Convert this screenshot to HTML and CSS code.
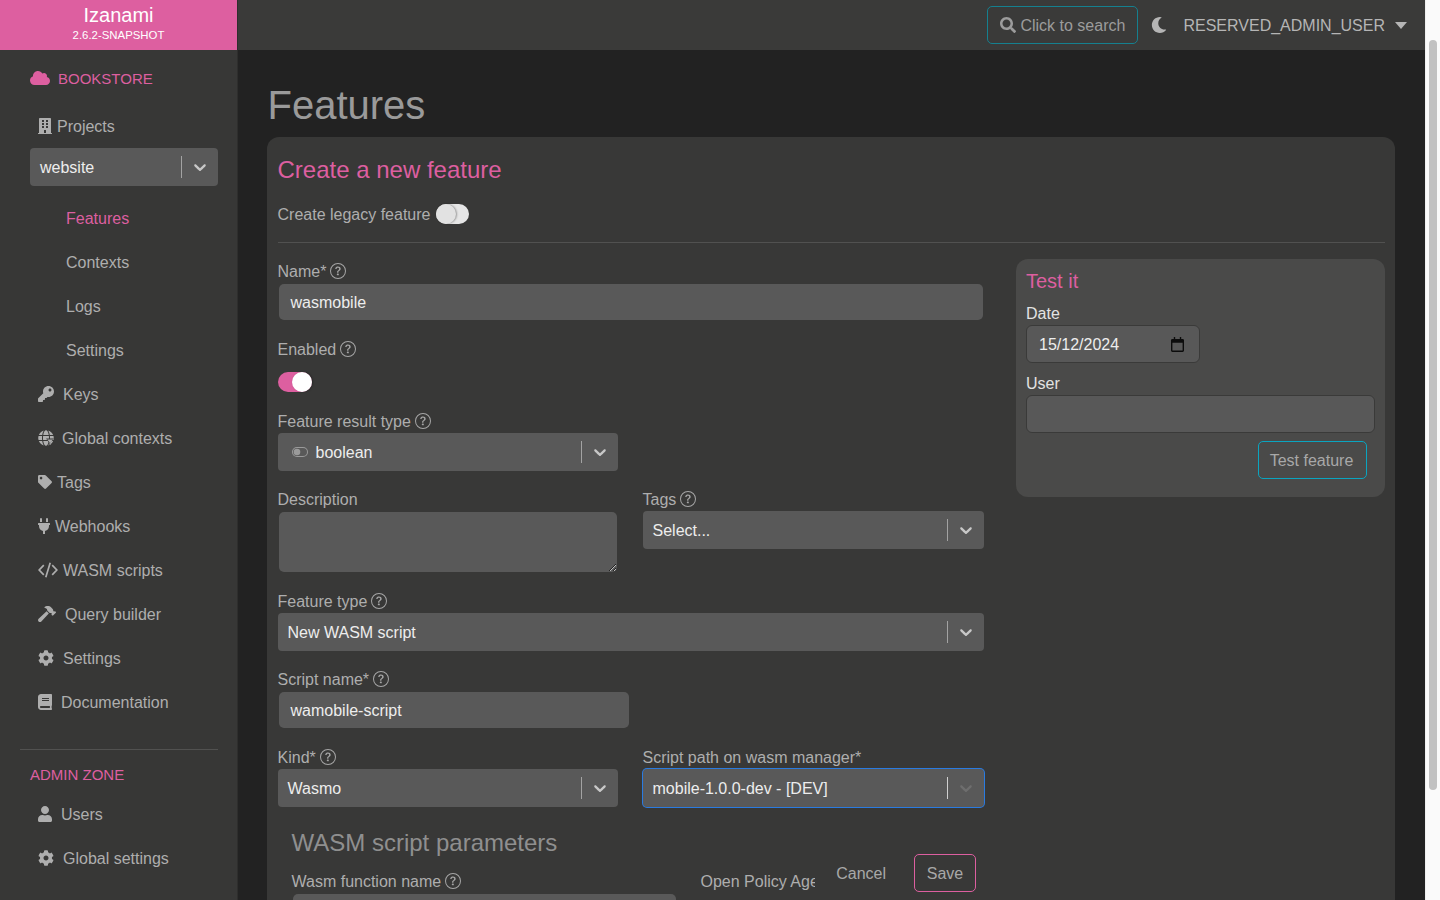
FILE: index.html
```html
<!DOCTYPE html>
<html lang="en">
<head>
<meta charset="utf-8">
<title>Izanami</title>
<link rel="stylesheet" href="styles.css">
</head>
<body>
<svg class="sprite" aria-hidden="true">
  <symbol id="i-cloud" viewBox="0 0 640 512"><path d="M537.6 226.6c4.1-10.7 6.4-22.4 6.4-34.6 0-53-43-96-96-96-19.7 0-38.1 6-53.3 16.2C367 64.2 315.3 32 256 32c-88.4 0-160 71.6-160 160 0 2.7.1 5.4.2 8.1C40.2 219.8 0 273.2 0 336c0 79.5 64.5 144 144 144h368c70.7 0 128-57.3 128-128 0-61.9-44-113.6-102.4-125.4z"/></symbol>
  <symbol id="i-building" viewBox="0 0 448 512"><path d="M436 480h-20V24c0-13.255-10.745-24-24-24H56C42.745 0 32 10.745 32 24v456H12c-6.627 0-12 5.373-12 12v20h448v-20c0-6.627-5.373-12-12-12zM128 76c0-6.627 5.373-12 12-12h40c6.627 0 12 5.373 12 12v40c0 6.627-5.373 12-12 12h-40c-6.627 0-12-5.373-12-12V76zm0 96c0-6.627 5.373-12 12-12h40c6.627 0 12 5.373 12 12v40c0 6.627-5.373 12-12 12h-40c-6.627 0-12-5.373-12-12v-40zm52 148h-40c-6.627 0-12-5.373-12-12v-40c0-6.627 5.373-12 12-12h40c6.627 0 12 5.373 12 12v40c0 6.627-5.373 12-12 12zm76 160h-64v-84c0-6.627 5.373-12 12-12h40c6.627 0 12 5.373 12 12v84zm64-172c0 6.627-5.373 12-12 12h-40c-6.627 0-12-5.373-12-12v-40c0-6.627 5.373-12 12-12h40c6.627 0 12 5.373 12 12v40zm0-96c0 6.627-5.373 12-12 12h-40c-6.627 0-12-5.373-12-12v-40c0-6.627 5.373-12 12-12h40c6.627 0 12 5.373 12 12v40zm0-96c0 6.627-5.373 12-12 12h-40c-6.627 0-12-5.373-12-12V76c0-6.627 5.373-12 12-12h40c6.627 0 12 5.373 12 12v40z"/></symbol>
  <symbol id="i-key" viewBox="0 0 512 512"><path d="M512 176.001C512 273.203 433.202 352 336 352c-11.22 0-22.19-1.062-32.827-3.069l-24.012 27.014A23.999 23.999 0 0 1 261.223 384H224v40c0 13.255-10.745 24-24 24h-40v40c0 13.255-10.745 24-24 24H24c-13.255 0-24-10.745-24-24v-78.059c0-6.365 2.529-12.47 7.029-16.971l161.802-161.802C163.108 213.814 160 195.271 160 176 160 78.798 238.797.001 335.999 0 433.488-.001 512 78.511 512 176.001zM336 128c0 26.51 21.49 48 48 48s48-21.49 48-48-21.49-48-48-48-48 21.49-48 48z"/></symbol>
  <symbol id="i-globe" viewBox="0 0 496 512"><path d="M336.5 160C322 70.7 287.8 8 248 8s-74 62.7-88.5 152h177zM152 256c0 22.2 1.2 43.5 3.3 64h185.3c2.1-20.5 3.3-41.8 3.3-64s-1.2-43.5-3.3-64H155.3c-2.1 20.5-3.3 41.8-3.3 64zm324.7-96c-28.6-67.9-86.5-120.4-158-141.6 24.4 33.8 41.2 84.7 50 141.6h108zM177.2 18.4C105.8 39.6 47.8 92.1 19.3 160h108c8.7-56.9 25.5-107.8 49.9-141.6zM487.4 192H372.7c2.1 21 3.3 42.5 3.3 64s-1.2 43-3.3 64h114.6c5.5-20.5 8.6-41.8 8.6-64s-3.1-43.5-8.5-64zM120 256c0-21.5 1.2-43 3.3-64H8.6C3.2 212.5 0 233.8 0 256s3.2 43.5 8.6 64h114.6c-2-21-3.2-42.5-3.2-64zm39.5 96c14.5 89.3 48.7 152 88.5 152s74-62.7 88.5-152h-177zm159.3 141.6c71.4-21.2 129.4-73.7 158-141.6h-108c-8.8 56.9-25.6 107.8-50 141.6zM19.3 352c28.6 67.9 86.5 120.4 158 141.6-24.4-33.8-41.2-84.7-50-141.6h-108z"/><path class="globe-cut" d="M250 270h246l-108 130v112h-30L340 400z"/><path d="M285 300h186l-76 92v90l-34-22v-68z"/></symbol>
  <symbol id="i-tag" viewBox="0 0 512 512"><path d="M0 252.118V48C0 21.49 21.49 0 48 0h204.118a48 48 0 0 1 33.941 14.059l211.882 211.882c18.745 18.745 18.745 49.137 0 67.882L293.823 497.941c-18.745 18.745-49.137 18.745-67.882 0L14.059 286.059A48 48 0 0 1 0 252.118zM112 64c-26.51 0-48 21.49-48 48s21.49 48 48 48 48-21.49 48-48-21.49-48-48-48z"/></symbol>
  <symbol id="i-plug" viewBox="0 0 384 512"><path d="M320,32a32,32,0,0,0-64,0v96h64Zm48,128H16A16,16,0,0,0,0,176v32a16,16,0,0,0,16,16H32v32A160.07,160.07,0,0,0,160,412.8V512h64V412.8A160.07,160.07,0,0,0,352,256V224h16a16,16,0,0,0,16-16V176A16,16,0,0,0,368,160ZM128,32a32,32,0,0,0-64,0v96h64Z"/></symbol>
  <symbol id="i-code" viewBox="0 0 20 16"><path class="code-stroke" d="M5.8 3.2 1.200 8l4.600 4.800M14.200 3.200 18.800 8l-4.600 4.800M12.200.8 7.800 15.200"/></symbol>
  <symbol id="i-hammer" viewBox="0 0 576 512"><path d="M571.31 193.94l-22.63-22.63c-6.25-6.25-16.38-6.25-22.63 0l-11.31 11.31-28.9-28.9c5.63-21.31.36-44.9-16.35-61.61l-45.25-45.25c-62.48-62.48-163.79-62.48-226.28 0l90.51 45.25v18.75c0 16.97 6.74 33.25 18.75 45.25l49.14 49.14c16.71 16.71 40.3 21.98 61.61 16.35l28.9 28.9-11.31 11.31c-6.25 6.25-6.25 16.38 0 22.63l22.63 22.63c6.25 6.25 16.38 6.25 22.63 0l90.51-90.51c6.23-6.24 6.23-16.37-.02-22.62zm-286.72-15.2c-3.7-3.7-6.84-7.79-9.85-11.95L19.64 404.96c-25.57 23.88-26.26 64.19-1.53 88.93s65.05 24.05 88.93-1.53l238.13-255.07c-3.96-2.91-7.9-5.87-11.44-9.41l-49.14-49.14z"/></symbol>
  <symbol id="i-cog" viewBox="0 0 512 512"><path d="M487.4 315.7l-42.6-24.6c4.3-23.2 4.3-47 0-70.2l42.6-24.6c4.9-2.8 7.1-8.6 5.5-14-11.1-35.6-30-67.8-54.7-94.6-3.8-4.1-10-5.1-14.8-2.3L380.8 110c-17.9-15.4-38.5-27.3-60.8-35.1V25.8c0-5.6-3.9-10.5-9.4-11.7-36.7-8.2-74.3-7.8-109.2 0-5.500 1.2-9.400 6.100-9.400 11.700V75c-22.200 7.900-42.800 19.800-60.800 35.100L88.700 85.500c-4.900-2.800-11-1.900-14.800 2.300-24.700 26.700-43.600 58.900-54.700 94.600-1.700 5.400.6 11.200 5.500 14L67.300 221c-4.300 23.200-4.300 47 0 70.200l-42.600 24.600c-4.900 2.800-7.100 8.600-5.500 14 11.100 35.600 30 67.800 54.700 94.600 3.800 4.100 10 5.100 14.800 2.300l42.600-24.600c17.900 15.400 38.500 27.300 60.800 35.100v49.200c0 5.600 3.900 10.500 9.400 11.700 36.700 8.200 74.300 7.800 109.200 0 5.500-1.200 9.400-6.100 9.400-11.700v-49.200c22.200-7.900 42.800-19.800 60.800-35.100l42.600 24.600c4.900 2.800 11 1.900 14.800-2.300 24.700-26.700 43.600-58.900 54.700-94.600 1.500-5.500-.7-11.300-5.600-14.100zM256 336c-44.100 0-80-35.900-80-80s35.900-80 80-80 80 35.900 80 80-35.900 80-80 80z"/></symbol>
  <symbol id="i-book" viewBox="0 0 448 512"><path d="M448 360V24c0-13.300-10.700-24-24-24H96C43 0 0 43 0 96v320c0 53 43 96 96 96h328c13.300 0 24-10.700 24-24v-16c0-7.500-3.500-14.300-8.900-18.700-4.200-15.400-4.200-59.300 0-74.700 5.400-4.300 8.900-11.100 8.900-18.600zM128 134c0-3.300 2.700-6 6-6h212c3.300 0 6 2.700 6 6v20c0 3.300-2.700 6-6 6H134c-3.300 0-6-2.700-6-6v-20zm0 64c0-3.300 2.700-6 6-6h212c3.300 0 6 2.700 6 6v20c0 3.300-2.700 6-6 6H134c-3.300 0-6-2.700-6-6v-20zm253.400 250H96c-17.700 0-32-14.300-32-32 0-17.600 14.400-32 32-32h285.400c-1.900 17.100-1.900 46.900 0 64z"/></symbol>
  <symbol id="i-user" viewBox="0 0 448 512"><path d="M224 256c70.700 0 128-57.300 128-128S294.700 0 224 0 96 57.300 96 128s57.300 128 128 128zm89.600 32h-16.700c-22.200 10.200-46.900 16-72.900 16s-50.600-5.800-72.900-16h-16.700C60.200 288 0 348.200 0 422.400V464c0 26.500 21.500 48 48 48h352c26.500 0 48-21.500 48-48v-41.600c0-74.200-60.200-134.400-134.400-134.400z"/></symbol>
  <symbol id="i-search" viewBox="0 0 512 512"><path d="M505 442.700L405.300 343c-4.500-4.500-10.600-7-17-7H372c27.600-35.300 44-79.700 44-128C416 93.100 322.900 0 208 0S0 93.100 0 208s93.100 208 208 208c48.300 0 92.700-16.400 128-44v16.300c0 6.400 2.500 12.500 7 17l99.700 99.700c9.400 9.400 24.600 9.400 33.900 0l28.300-28.300c9.400-9.400 9.400-24.600.1-34zM208 336c-70.700 0-128-57.200-128-128 0-70.700 57.200-128 128-128 70.700 0 128 57.200 128 128 0 70.700-57.200 128-128 128z"/></symbol>
  <symbol id="i-moon" viewBox="0 0 512 512"><path d="M283.211 512c78.962 0 151.079-35.925 198.857-94.792 7.068-8.708-.639-21.430-11.562-19.350-124.203 23.654-238.262-71.576-238.262-196.954 0-72.222 38.662-138.635 101.498-174.394 9.686-5.512 7.250-20.197-3.756-22.230A258.156 258.156 0 0 0 283.211 0c-141.309 0-256 114.511-256 256 0 141.309 114.511 256 256 256z"/></symbol>
  <symbol id="i-chevron" viewBox="0 0 20 20"><path d="M4.516 7.548c0.436-0.446 1.043-0.481 1.576 0l3.908 3.747 3.908-3.747c0.533-0.481 1.141-0.446 1.574 0 0.436 0.445 0.408 1.197 0 1.615-0.406 0.418-4.695 4.502-4.695 4.502-0.217 0.223-0.502 0.335-0.787 0.335s-0.57-0.112-0.789-0.335c0 0-4.287-4.084-4.695-4.502s-0.436-1.170 0-1.615z"/></symbol>
  <symbol id="i-help" viewBox="0 0 16 16"><path d="M8 15A7 7 0 1 1 8 1a7 7 0 0 1 0 14zm0 1A8 8 0 1 0 8 0a8 8 0 0 0 0 16z"/><path d="M5.255 5.786a.237.237 0 0 0 .241.247h.825c.138 0 .248-.113.266-.25.09-.656.54-1.134 1.342-1.134.686 0 1.314.343 1.314 1.168 0 .635-.374.927-.965 1.371-.673.489-1.206 1.060-1.168 1.987l.003.217a.25.25 0 0 0 .25.246h.811a.25.25 0 0 0 .25-.25v-.105c0-.718.273-.927 1.010-1.486.609-.463 1.244-.977 1.244-2.056 0-1.511-1.276-2.241-2.673-2.241-1.267 0-2.655.59-2.750 2.286zm1.557 5.763c0 .533.425.927 1.010.927.609 0 1.028-.394 1.028-.927 0-.552-.42-.94-1.029-.94-.584 0-1.009.388-1.009.94z"/></symbol>
  <symbol id="i-toggle" viewBox="0 0 16 10"><path d="M5 0h6a5 5 0 0 1 0 10H5A5 5 0 0 1 5 0zm0 1a4 4 0 0 0 0 8h6a4 4 0 0 0 0-8z"/><circle cx="5" cy="5" r="3.300"/></symbol>
  <symbol id="i-calendar" viewBox="0 0 14 16"><path d="M3 0h1.500v2h5V0H11v2h1.500A1.500 1.500 0 0 1 14 3.500v11a1.500 1.500 0 0 1-1.500 1.500h-11A1.500 1.500 0 0 1 0 14.500v-11A1.500 1.500 0 0 1 1.500 2H3zM1.500 6v8.500h11V6z"/></symbol>
</svg>

<div class="app">
  <aside class="sidebar">
    <div class="brand">
      <div class="brand-name">Izanami</div>
      <div class="brand-version">2.6.2-SNAPSHOT</div>
    </div>
    <div class="tenant"><svg class="ic-cloud"><use href="#i-cloud"/></svg><span>BOOKSTORE</span></div>
    <nav class="nav">
      <a class="nav-item gap-s"><svg class="ic w14"><use href="#i-building"/></svg>Projects</a>
      <div class="select select-side">
        <span class="select-value">website</span>
        <span class="select-sep"></span>
        <span class="select-arrow"><svg><use href="#i-chevron"/></svg></span>
      </div>
      <div class="subnav">
        <a class="sub-item active">Features</a>
        <a class="sub-item">Contexts</a>
        <a class="sub-item">Logs</a>
        <a class="sub-item">Settings</a>
      </div>
      <a class="nav-item gap-l"><svg class="ic w16"><use href="#i-key"/></svg>Keys</a>
      <a class="nav-item gap-m"><svg class="ic w16 globe"><use href="#i-globe"/></svg>Global contexts</a>
      <a class="nav-item gap-s"><svg class="ic w14"><use href="#i-tag"/></svg>Tags</a>
      <a class="nav-item gap-s"><svg class="ic w12"><use href="#i-plug"/></svg>Webhooks</a>
      <a class="nav-item gap-s"><svg class="ic w20"><use href="#i-code"/></svg>WASM scripts</a>
      <a class="nav-item gap-l"><svg class="ic w18"><use href="#i-hammer"/></svg>Query builder</a>
      <a class="nav-item gap-l"><svg class="ic w16"><use href="#i-cog"/></svg>Settings</a>
      <a class="nav-item gap-l"><svg class="ic w14"><use href="#i-book"/></svg>Documentation</a>
    </nav>
    <hr class="side-rule">
    <div class="admin-title">ADMIN ZONE</div>
    <nav class="nav">
      <a class="nav-item gap-l"><svg class="ic w14"><use href="#i-user"/></svg>Users</a>
      <a class="nav-item gap-l"><svg class="ic w16"><use href="#i-cog"/></svg>Global settings</a>
    </nav>
  </aside>

  <div class="content">
    <header class="topbar">
      <button class="search-btn"><svg class="ic-search"><use href="#i-search"/></svg>Click to search</button>
      <svg class="ic-moon"><use href="#i-moon"/></svg>
      <span class="user-name">RESERVED_ADMIN_USER</span>
      <span class="caret"></span>
    </header>

    <main class="main">
      <h1 class="page-title">Features</h1>
      <section class="card">
        <h2 class="card-title">Create a new feature</h2>
        <div class="legacy-row">
          <span class="legacy-text">Create legacy feature</span>
          <span class="switch"><span class="knob"></span></span>
        </div>
        <hr class="rule">
        <div class="form-grid">
          <div class="form-col">
            <div class="field first">
              <label class="label">Name*<svg class="help"><use href="#i-help"/></svg></label>
              <div class="input">wasmobile</div>
            </div>
            <div class="field">
              <label class="label">Enabled<svg class="help"><use href="#i-help"/></svg></label>
              <span class="switch on"><span class="knob"></span></span>
            </div>
            <div class="field half gap-after-switch">
              <label class="label">Feature result type<svg class="help"><use href="#i-help"/></svg></label>
              <div class="select">
                <svg class="ic-toggle"><use href="#i-toggle"/></svg>
                <span class="select-value with-icon">boolean</span>
                <span class="select-sep"></span>
                <span class="select-arrow"><svg><use href="#i-chevron"/></svg></span>
              </div>
            </div>
            <div class="two-col">
              <div class="field">
                <label class="label">Description</label>
                <textarea class="textarea"></textarea>
              </div>
              <div class="field">
                <label class="label">Tags<svg class="help"><use href="#i-help"/></svg></label>
                <div class="select">
                  <span class="select-value">Select...</span>
                  <span class="select-sep"></span>
                  <span class="select-arrow"><svg><use href="#i-chevron"/></svg></span>
                </div>
              </div>
            </div>
            <div class="field">
              <label class="label">Feature type<svg class="help"><use href="#i-help"/></svg></label>
              <div class="select">
                <span class="select-value">New WASM script</span>
                <span class="select-sep"></span>
                <span class="select-arrow"><svg><use href="#i-chevron"/></svg></span>
              </div>
            </div>
            <div class="field script-field">
              <label class="label">Script name*<svg class="help"><use href="#i-help"/></svg></label>
              <div class="input">wamobile-script</div>
            </div>
            <div class="two-col">
              <div class="field">
                <label class="label">Kind*<svg class="help"><use href="#i-help"/></svg></label>
                <div class="select">
                  <span class="select-value">Wasmo</span>
                  <span class="select-sep"></span>
                  <span class="select-arrow"><svg><use href="#i-chevron"/></svg></span>
                </div>
              </div>
              <div class="field">
                <label class="label">Script path on wasm manager*</label>
                <div class="select focused">
                  <span class="select-value">mobile-1.0.0-dev - [DEV]</span>
                  <span class="select-sep"></span>
                  <span class="select-arrow"><svg><use href="#i-chevron"/></svg></span>
                </div>
              </div>
            </div>
            <div class="wasm-params">
              <h3 class="wasm-title">WASM script parameters</h3>
              <div class="wasm-row">
                <div class="wasm-field">
                  <label class="label">Wasm function name<svg class="help"><use href="#i-help"/></svg></label>
                  <div class="input"></div>
                </div>
                <span class="opa-label">Open Policy Agent</span>
              </div>
            </div>
            <div class="form-footer">
              <button class="btn-cancel">Cancel</button>
              <button class="btn-save">Save</button>
            </div>
          </div>

          <aside class="test-panel">
            <h3 class="test-title">Test it</h3>
            <label class="test-label">Date</label>
            <div class="test-input test-date"><span class="test-date-text">15/12/2024</span><svg class="ic-cal"><use href="#i-calendar"/></svg></div>
            <label class="test-label">User</label>
            <input class="test-input test-wide" type="text">
            <div class="test-actions"><button class="btn-test">Test feature</button></div>
          </aside>
        </div>
      </section>
    </main>
  </div>

  <div class="scrollbar"><div class="scroll-thumb"></div></div>
</div>
</body>
</html>
```

FILE: styles.css
```css
* { box-sizing: border-box; }
html, body { margin: 0; height: 100%; overflow: hidden; }
body {
  font-family: "Liberation Sans", Arial, sans-serif;
  font-size: 16px;
  background: #222222;
  color: #b0b0b0;
}
.sprite { display: none; }
svg { fill: currentColor; }

.app { display: flex; height: 900px; overflow: hidden; }

/* Sidebar */
.sidebar {
  flex: 0 0 238px;
  width: 238px;
  background: #373736;
  border-right: 1px solid #2e2e2d;
}
.brand {
  height: 50px;
  background: #dd5fa0;
  color: #fff;
  text-align: center;
  padding-top: 3px;
}
.brand-name { font-size: 20px; line-height: 24px; }
.brand-version { font-size: 11.400px; line-height: 16px; }
.tenant {
  height: 44px;
  margin: 6px 0 4px;
  padding-left: 30px;
  display: flex;
  align-items: center;
  gap: 8px;
  font-size: 15px;
  color: #dd5fa0;
}
.ic-cloud { width: 20px; height: 16px; }
.nav { display: flex; flex-direction: column; }
.nav-item {
  height: 44px;
  padding: 2px 0 0 38px;
  display: flex;
  align-items: center;
  color: #aeaeae;
}
.gap-s { gap: 5px; }
.gap-m { gap: 8px; }
.gap-l { gap: 9px; }
.ic { height: 16px; flex: none; margin-top: -2px; }
.w12 { width: 12px; }
.w14 { width: 14px; }
.w16 { width: 16px; }
.w18 { width: 18px; }
.w20 { width: 20px; }
.globe-cut { fill: #373736; }
.code-stroke { fill: none; stroke: currentColor; stroke-width: 1.700; }
.select-side { margin: 0 19.500px 10px 30px; }
.subnav { display: flex; flex-direction: column; }
.sub-item {
  height: 44px;
  padding: 2px 0 0 66px;
  display: flex;
  align-items: center;
  color: #aeaeae;
}
.sub-item.active { color: #dd5fa0; }
.side-rule {
  margin: 25px 19px 0 20px;
  border: 0;
  border-top: 1px solid #515150;
}
.admin-title {
  height: 42px;
  padding: 15px 0 0 30px;
  font-size: 15px;
  line-height: 20px;
  color: #dd5fa0;
}

/* Top bar */
.content { flex: 1; min-width: 0; display: flex; flex-direction: column; }
.topbar {
  flex: 0 0 50px;
  background: #3a3a39;
  display: flex;
  align-items: center;
  justify-content: flex-end;
  padding-right: 18px;
}
.search-btn {
  width: 151px;
  height: 38px;
  margin: 0 13px 0 0;
  padding: 2px 0 0 12px;
  display: flex;
  align-items: center;
  gap: 4px;
  background: transparent;
  border: 1px solid #15808f;
  border-radius: 5px;
  color: #9c9c9c;
  font: inherit;
}
.ic-search { width: 16px; height: 16px; margin-top: -2px; }
.ic-moon { width: 16px; height: 16px; color: #b5b5b5; margin-right: 16px; }
.user-name { color: #b5b5b5; padding-top: 2px; }
.caret {
  margin-left: 10px;
  width: 0;
  height: 0;
  border-left: 6.500px solid transparent;
  border-right: 6.500px solid transparent;
  border-top: 7px solid #b5b5b5;
}

/* Main */
.main { flex: 1; padding: 0 30px 0 29px; min-height: 0; overflow: hidden; }
.page-title {
  margin: 31px 0 7px;
  height: 49px;
  padding-left: .5px;
  font-size: 40px;
  line-height: 49px;
  font-weight: 400;
  color: #9a9a9a;
}
.card {
  background: #383837;
  border-radius: 12px;
  padding: 10px 10px 20px 10.500px;
  height: 900px;
}
.card-title {
  margin: 8px 0 0;
  font-size: 24px;
  line-height: 29px;
  font-weight: 400;
  color: #dd5fa0;
}
.legacy-row {
  margin-top: 20px;
  display: flex;
  align-items: center;
  gap: 5.500px;
  height: 20px;
  color: #aeaeae;
}
.legacy-text { padding-top: 2px; }
.switch {
  display: block;
  position: relative;
  width: 33px;
  height: 20px;
  border-radius: 10px;
  background: #e6e6e6;
}
.knob {
  position: absolute;
  top: 0;
  left: 0;
  width: 20px;
  height: 20px;
  border-radius: 50%;
  background: #e2e2e2;
  box-shadow: 1px 0 2px rgba(0, 0, 0, .35);
}
.switch.on { width: 34px; background: #dd5fa0; margin: 13px 0 0; }
.switch.on .knob { left: 14px; background: #fff; }
.rule { margin: 18px 0 0; border: 0; border-top: 1px solid #515150; }

.form-grid {
  display: grid;
  grid-template-columns: 706.500px 369px;
  column-gap: 32px;
  align-items: start;
}
.form-col { position: relative; display: flex; flex-direction: column; }
.field { margin-top: 18px; min-width: 0; }
.gap-after-switch { margin-top: 19px; }
.half { width: 340.500px; }
.script-field { width: 352px; }
.two-col { display: grid; grid-template-columns: 340.500px 341px; column-gap: 24.500px; }
.label {
  display: flex;
  align-items: center;
  height: 20px;
  margin-bottom: 2px;
  padding-top: 2px;
  line-height: 20px;
  color: #aeaeae;
}
.help { width: 16px; height: 16px; margin: -2px 0 0 4px; color: #a6a6a6; }
.input {
  margin: 3px 1px 1px;
  height: 36px;
  padding: 0 12px;
  line-height: 38px;
  background: #595959;
  border-radius: 5px;
  color: #ededed;
}
.textarea {
  display: block;
  width: calc(100% - 2px);
  height: 60px;
  margin: 3px 1px 1px;
  padding: 0;
  border: 0;
  border-radius: 5px;
  background: #595959;
  outline: none;
}
.select {
  display: flex;
  align-items: center;
  height: 38px;
  background: #595959;
  border-radius: 4px;
  color: #ededed;
}
.select-value { flex: 1; padding: 2px 0 0 10px; }
.select-value.with-icon { padding-left: 8px; }
.ic-toggle { width: 16px; height: 10px; margin-left: 14px; color: #9a9a9a; }
.select-sep { width: 1px; height: 22px; background: #a3a3a3; }
.select-arrow { width: 36px; height: 20px; padding: 0 8px; color: #c8c8c8; }
.select-arrow svg { display: block; width: 20px; height: 20px; }
.select.focused { box-shadow: 0 0 0 1px #2a7be0; }
.select.focused .select-sep { background: #d0d0d0; }
.select.focused .select-arrow { color: #6e6e6e; }

.wasm-params { padding-left: 14px; }
.wasm-title {
  margin: 21px 0 0;
  font-size: 24px;
  line-height: 30px;
  font-weight: 400;
  color: #8f8f8f;
}
.wasm-row { display: flex; margin-top: 13px; }
.wasm-field { width: 385px; flex: none; }
.opa-label { margin-left: 24px; padding-top: 1px; line-height: 20px; color: #aeaeae; white-space: nowrap; }
.form-footer {
  position: absolute;
  top: 603px;
  right: 8px;
  width: 161px;
  height: 60px;
  padding-top: 8px;
  background: #383837;
  display: flex;
  justify-content: flex-end;
  align-items: flex-start;
  gap: 28px;
}
.btn-cancel {
  height: 38px;
  margin: 0;
  padding: 2px 0 0;
  background: none;
  border: 0;
  color: #a8a8a8;
  font: inherit;
}
.btn-save {
  width: 62px;
  height: 38px;
  padding: 2px 0 0;
  background: none;
  border: 1px solid #dd5fa0;
  border-radius: 5px;
  color: #a8a8a8;
  font: inherit;
}

/* Test panel */
.test-panel {
  margin-top: 16px;
  height: 238px;
  padding: 10px;
  background: #4a4a49;
  border-radius: 12px;
}
.test-title {
  margin: 0;
  font-size: 20px;
  line-height: 24px;
  font-weight: 400;
  color: #dd5fa0;
}
.test-label {
  display: block;
  margin-top: 10px;
  padding-top: 1px;
  height: 20px;
  line-height: 20px;
  color: #e2e2e2;
}
.test-input {
  display: block;
  height: 38px;
  margin-top: 2px;
  background: #585858;
  border: 1px solid #3a3a39;
  border-radius: 6px;
  color: #ededed;
  font: inherit;
  outline: none;
}
.test-date {
  width: 174px;
  padding: 0 15px 0 12px;
  display: flex;
  align-items: center;
  justify-content: space-between;
}
.test-date-text { padding-top: 2px; }
.test-wide { width: 349px; }
.ic-cal { width: 13px; height: 15px; color: #0c0c0c; }
.test-actions { display: flex; justify-content: flex-end; margin-top: 8px; padding-right: 8px; }
.btn-test {
  width: 109px;
  height: 38px;
  padding: 2px 2px 0 0;
  background: none;
  border: 1px solid #0aa5c0;
  border-radius: 5px;
  color: #a8a8a8;
  font: inherit;
}

/* Page scrollbar */
.scrollbar {
  flex: 0 0 15px;
  background: #fafafa;
  border-left: 1px solid #efefef;
  padding: 40px 3px 0;
}
.scroll-thumb { height: 750px; border-radius: 5px; background: #c1c1c1; }
```
